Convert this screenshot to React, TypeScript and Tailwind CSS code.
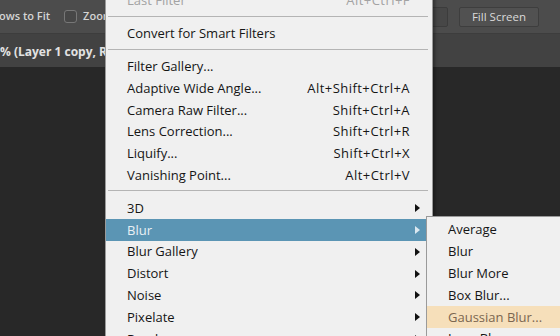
import React from "react";

type Item =
  | { kind: "sep" }
  | { kind: "item"; label: string; shortcut?: string; sub?: boolean; disabled?: boolean; active?: boolean };

const filterItems: Item[] = [
  { kind: "item", label: "Last Filter", shortcut: "Alt+Ctrl+F", disabled: true },
  { kind: "sep" },
  { kind: "item", label: "Convert for Smart Filters" },
  { kind: "sep" },
  { kind: "item", label: "Filter Gallery..." },
  { kind: "item", label: "Adaptive Wide Angle...", shortcut: "Alt+Shift+Ctrl+A" },
  { kind: "item", label: "Camera Raw Filter...", shortcut: "Shift+Ctrl+A" },
  { kind: "item", label: "Lens Correction...", shortcut: "Shift+Ctrl+R" },
  { kind: "item", label: "Liquify...", shortcut: "Shift+Ctrl+X" },
  { kind: "item", label: "Vanishing Point...", shortcut: "Alt+Ctrl+V" },
  { kind: "sep" },
  { kind: "item", label: "3D", sub: true },
  { kind: "item", label: "Blur", sub: true, active: true },
  { kind: "item", label: "Blur Gallery", sub: true },
  { kind: "item", label: "Distort", sub: true },
  { kind: "item", label: "Noise", sub: true },
  { kind: "item", label: "Pixelate", sub: true },
  { kind: "item", label: "Render", sub: true },
];

const blurItems = ["Average", "Blur", "Blur More", "Box Blur...", "Gaussian Blur...", "Lens Blur..."];

function Arrow({ light }: { light?: boolean }) {
  return (
    <span
      className={
        light
          ? "block w-0 h-0 border-y-[4px] border-y-transparent border-l-[5px] border-l-[#dbe8f0]"
          : "block w-0 h-0 border-y-[4px] border-y-transparent border-l-[5px] border-l-[#111]"
      }
    />
  );
}

function MenuRow({ item }: { item: Item }) {
  if (item.kind === "sep") {
    return (
      <div className="pt-[4px] pb-[6px] ml-[2px] mr-[4px]">
        <div className="h-px bg-[#b4b4b4]" />
      </div>
    );
  }
  const color = item.disabled ? "text-[#a3a3a3]" : item.active ? "text-[#e9f0f4]" : "text-[#151515]";
  return (
    <div className={`flex items-center h-[21.8px] pl-[21px] pr-[12px] ${item.active ? "bg-[#5b95b4]" : ""} ${color}`}>
      <span>{item.label}</span>
      <span className="ml-auto pr-[5px] tracking-[0.45px]">{item.shortcut}</span>
      <span className="w-[5px] flex items-center">{item.sub && <Arrow light={item.active} />}</span>
    </div>
  );
}

export default function App() {
  return (
    <div className="relative w-[560px] h-[336px] overflow-hidden bg-[#282828] flex flex-col font-['Open_Sans',sans-serif]">
      {/* options bar */}
      <div className="h-[33px] bg-[#4c4c4c] flex items-center text-[11px] font-semibold text-[#d4d4d4] shrink-0">
        <span className="-ml-[1px]">ows to Fit</span>
        <span className="ml-[14px] w-[13px] h-[13px] rounded-[3px] border border-[#777] bg-[#474747]" />
        <span className="ml-[6px] whitespace-nowrap">Zoom All Windows</span>
        <div className="ml-auto flex items-center gap-[11px] pr-[21px] font-normal">
          <div className="w-[70px] h-[20px] rounded-[2px] border border-[#3c3c3c] bg-[#474747]" />
          <div className="w-[80px] h-[20px] rounded-[2px] border border-[#3e3e3e] bg-[#515151] flex items-center justify-center text-[11.5px] text-[#dadada]">
            Fill Screen
          </div>
        </div>
      </div>
      {/* document tab bar */}
      <div className="h-[34px] bg-[#424242] border-t border-[#3d3d3d] flex items-center pt-[3px] text-[12px] font-bold text-[#e2e2e2] shrink-0 whitespace-nowrap">
        <span>% (Layer 1 copy, RGB/8) *</span>
      </div>
      <div className="flex-1 bg-[#282828]" />

      {/* Filter menu */}
      <div className="absolute left-[105px] top-[-11px] w-[328px] bg-[#f0f0f0] border border-[#9a9a9a] text-[13px] leading-none shadow-[2px_2px_3px_rgba(0,0,0,0.35)]">
        {filterItems.map((it, i) => (
          <MenuRow key={i} item={it} />
        ))}
      </div>

      {/* Blur submenu */}
      <div className="absolute left-[426px] top-[216px] w-[200px] bg-[#f0f0f0] border border-[#9a9a9a] pt-[2px] text-[13px] leading-none">
        {blurItems.map((b) => (
          <div
            key={b}
            className={`flex items-center h-[21.8px] pl-[21px] ${
              b === "Gaussian Blur..." ? "bg-[#f6dfba] text-[#7b6650]" : "text-[#151515]"
            }`}
          >
            {b}
          </div>
        ))}
      </div>
    </div>
  );
}
